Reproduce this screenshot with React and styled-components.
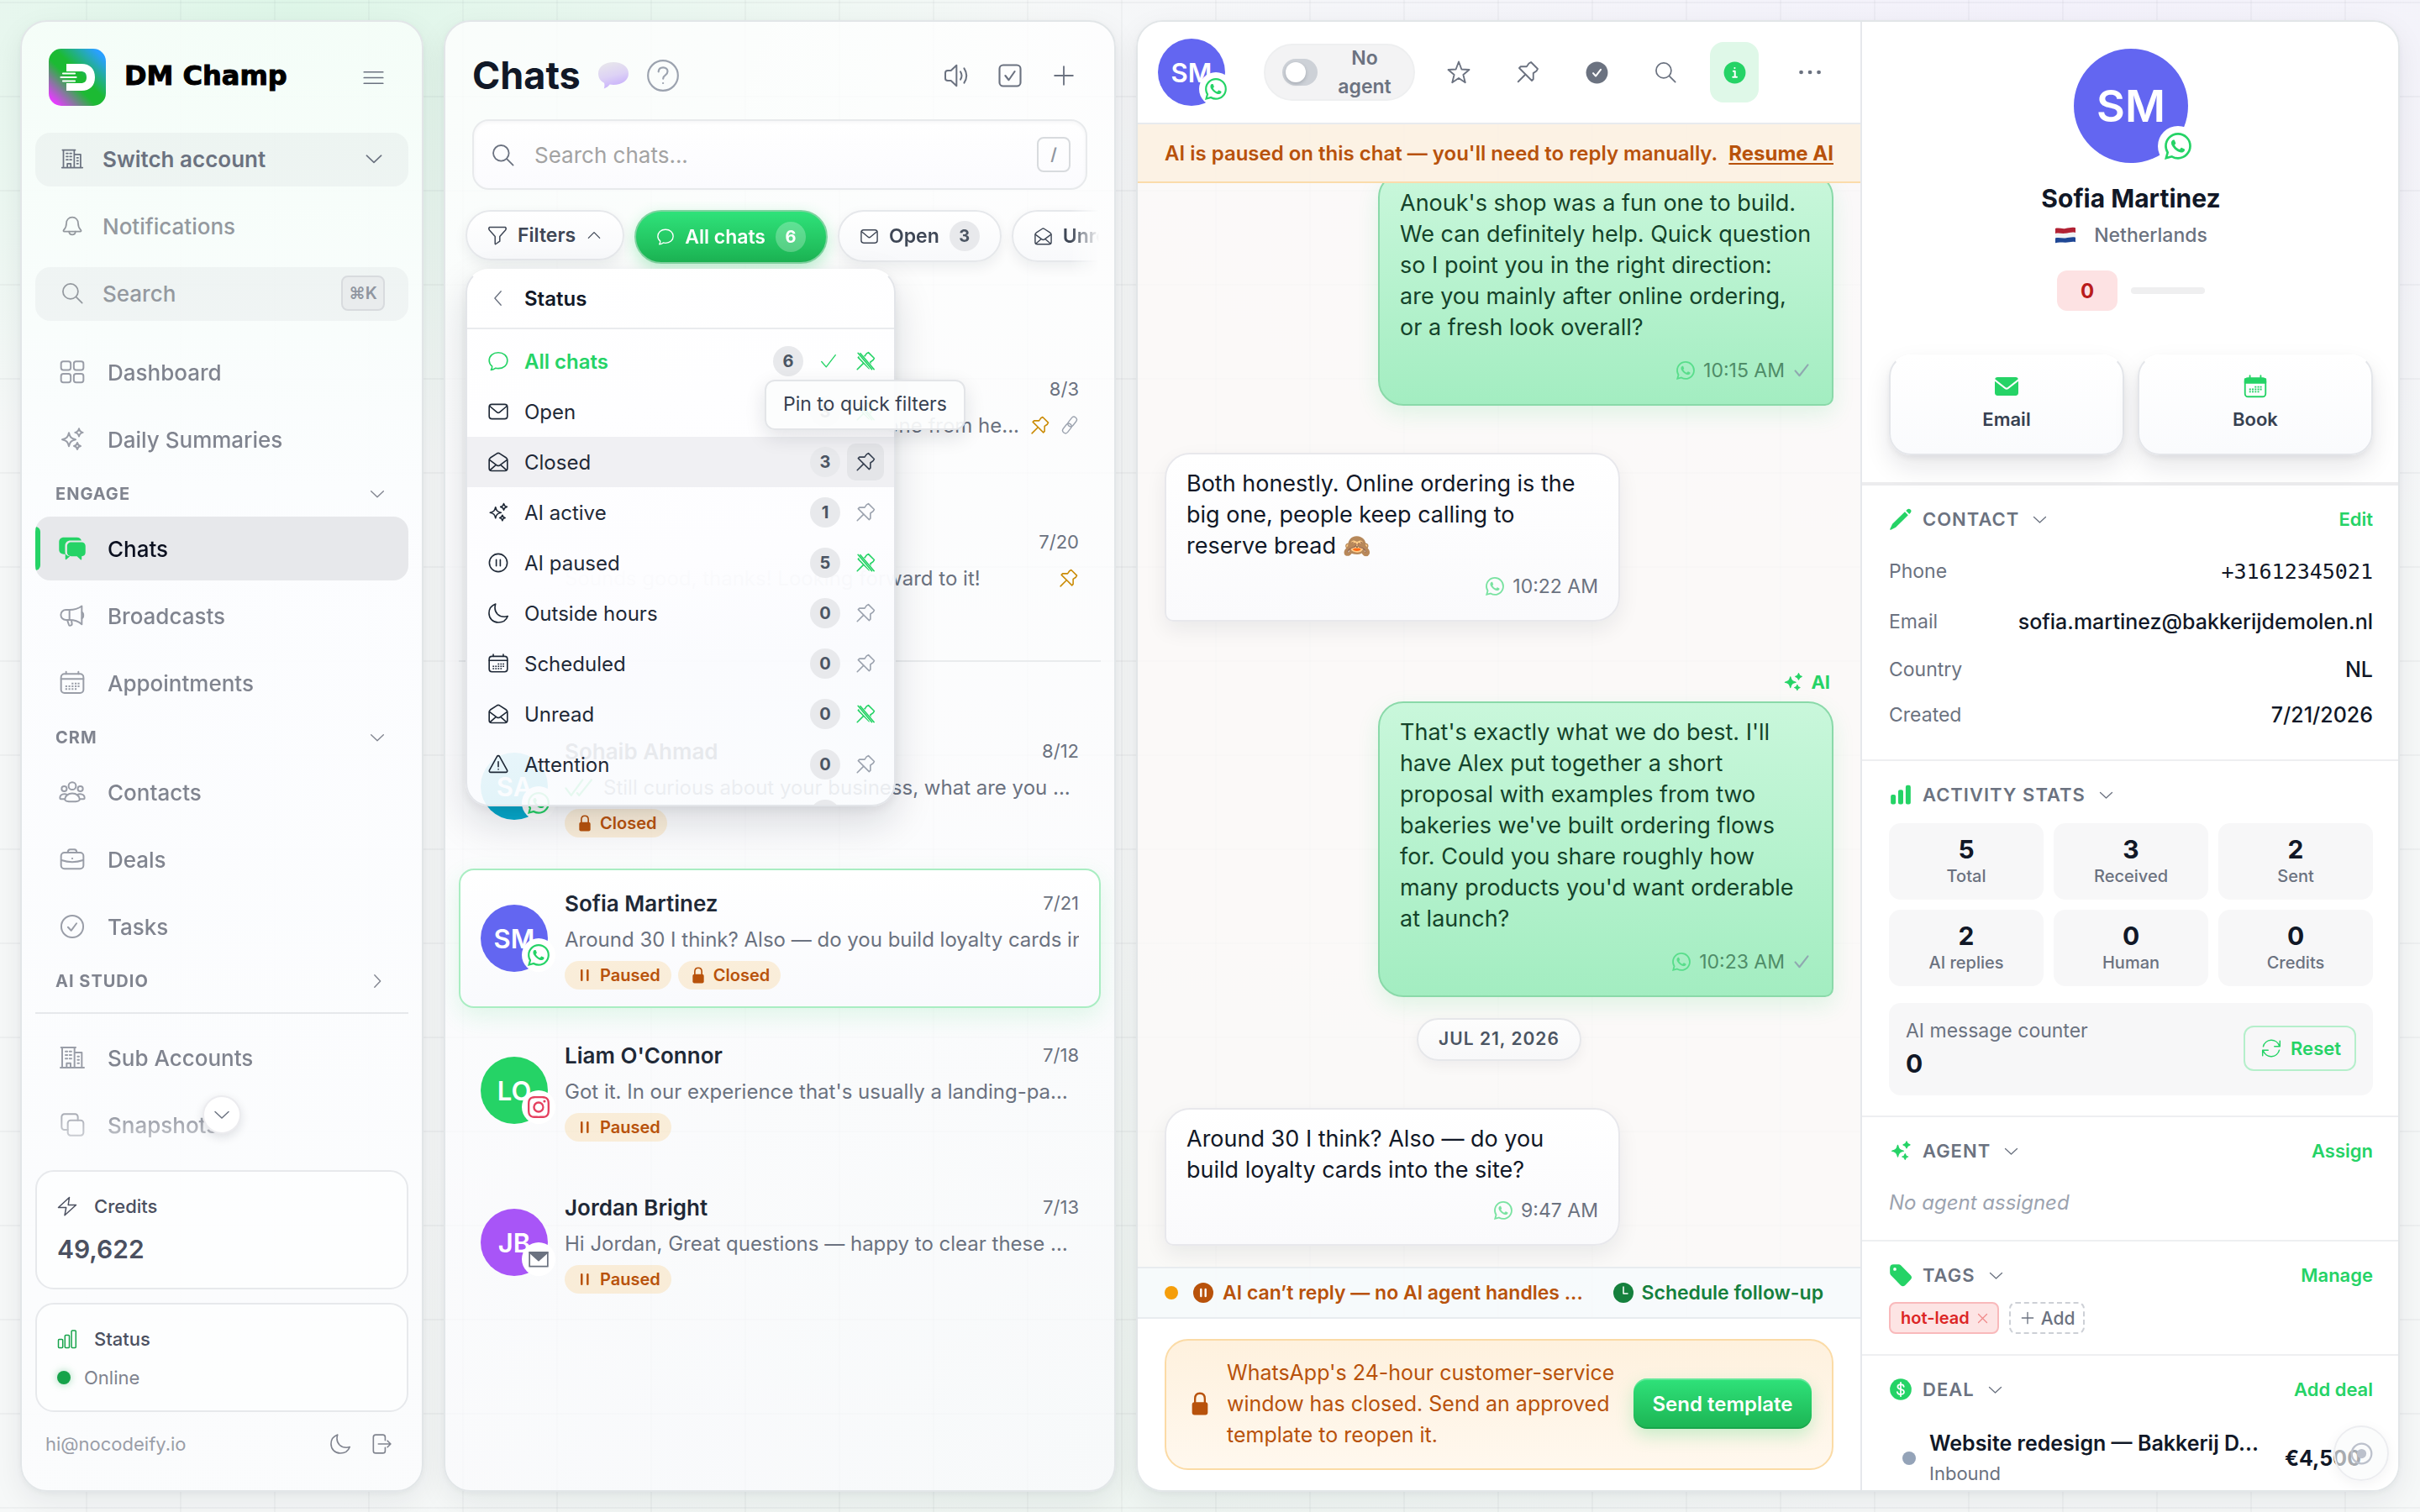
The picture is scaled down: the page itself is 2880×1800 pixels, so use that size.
import React from "react";
import styled, { createGlobalStyle, css } from "styled-components";
import { BsWhatsapp, BsInstagram } from "react-icons/bs";

const GlobalStyle = createGlobalStyle`
  * {
    box-sizing: border-box;
  }
  body {
    margin: 0;
    font-family: Inter, "Noto Sans", sans-serif;
    font-size: 24px;
    color: #111827;
    -webkit-font-smoothing: antialiased;
  }
  button, input {
    font: inherit;
    color: inherit;
  }
  button {
    border: 0;
    background: none;
    padding: 0;
    cursor: pointer;
  }
  p, h1, h2, h3, ul, dl, dd {
    margin: 0;
    padding: 0;
  }
  ul {
    list-style: none;
  }
  a {
    color: inherit;
    text-decoration: none;
  }
`;

/* ---------- icons ---------- */

const sparkle = (
  <>
    <path d="M9 6.2c.9 4 2 5.1 6 6-4 .9-5.1 2-6 6-.9-4-2-5.1-6-6 4-.9 5.1-2 6-6z" />
    <path d="M18 2.4c.5 2.3 1.2 3 3.5 3.5-2.3.5-3 1.2-3.5 3.5-.5-2.3-1.2-3-3.5-3.5 2.3-.5 3-1.2 3.5-3.5z" />
    <path d="M16.5 15c.4 2 1 2.6 3 3-2 .4-2.6 1-3 3-.4-2-1-2.6-3-3 2-.4 2.6-1 3-3z" />
  </>
);
const pin = (
  <>
    <path d="M15.2 2.4 21.6 8.8 20.4 10.8 17.4 12.9 17.4 18.6 16 20 4 8 5.4 6.6 11.1 6.6 13.2 3.6z" />
    <path d="M9.8 14.2 3 21" />
  </>
);
const building = (
  <>
    <path d="M3 21V3h11v18M14 7.5h6.5V21M1.5 21h21M2 3h13M7 21v-4h3.5v4" />
    <path d="M6 6.5h1.6M9.6 6.5h1.6M6 9.7h1.6M9.6 9.7h1.6M6 13h1.6M9.6 13h1.6M16.8 11h1.2M16.8 14h1.2M16.8 17h1.2" />
  </>
);
const calendarDots = (
  <path
    d="M12.2 12.5h.1M15 12.5h.1M17.6 12.5h.1M6.6 15h.1M9.4 15h.1M12.2 15h.1M15 15h.1M17.6 15h.1M6.6 17.5h.1M9.4 17.5h.1M12.2 17.5h.1M15 17.5h.1"
    strokeLinecap="square"
  />
);

const glyphs = {
  menu: <path d="M2 6h20M2 12h20M2 18h20" />,
  building,
  bell: (
    <>
      <path d="M12 3.2c-3.6 0-6 2.6-6 6 0 4.4-1.4 5.4-2.8 7-.5.7-.2 1.4.7 1.4h16.2c.9 0 1.2-.7.7-1.4-1.4-1.6-2.8-2.6-2.8-7 0-3.4-2.4-6-6-6z" />
      <path d="M8.7 17.7c.2 2 1.5 3.2 3.3 3.2s3.1-1.2 3.3-3.2" />
    </>
  ),
  search: (
    <>
      <circle cx="10.2" cy="10.2" r="7.7" />
      <path d="m16 16 6 6" />
    </>
  ),
  down: <path d="m4 8.5 8 7.5 8-7.5" />,
  up: <path d="m4 16 8-8 8 8" />,
  right: <path d="m8.5 4 7.5 8-7.5 8" />,
  left: <path d="m15.5 3-8 9 8 9" />,
  grid: (
    <>
      <rect x="2" y="2.5" width="8.6" height="7.6" rx="2" />
      <rect x="13.4" y="2.5" width="8.6" height="7.6" rx="2" />
      <rect x="2" y="13.5" width="8.6" height="7.6" rx="2" />
      <rect x="13.4" y="13.5" width="8.6" height="7.6" rx="2" />
    </>
  ),
  sparkle,
  chats: (
    <g fill="currentColor" stroke="none">
      <path d="M4.500 2h11.500c2.300 0 3.700 1 4.200 2.900H10.600c-3.200 0-5 1.800-5 4.900v5c0 .9.1 1.600.4 2.200H4.500C2 17 .2 15.400.2 12.900V6.200C.2 3.600 2 2 4.500 2z" />
      <path d="M11.200 6.300h9c2.200 0 3.600 1.400 3.600 3.500v5.600c0 2.100-1.300 3.500-3.400 3.500v2.600c0 .6-.6.8-1 .4l-3.200-3h-5c-2.200 0-3.800-1.400-3.800-3.500V9.800c0-2.100 1.600-3.500 3.800-3.500z" />
      <path d="M5.800 17v4.300c0 .5.500.8.9.4l3.300-2.700c-1.700-.2-3.100-.8-3.700-2z" />
    </g>
  ),
  horn: (
    <>
      <path d="M9.5 6.8c4 0 8-1.2 11-3.4v16.2c-3-2.6-7-3.8-11-3.8H6.3a4.5 4.5 0 0 1 0-9z" />
      <path d="M9.5 7v8.7M20.6 9c1.7.4 1.7 4.8 0 5.2M7.6 16l1.3 3.9c.6 1.5 3 1 2.8-.8l-.4-2.800" />
    </>
  ),
  calendar: (
    <>
      <rect x="2" y="4" width="20" height="17" rx="3" />
      <path d="M2 8.5h20M6.5 2v2M17.5 2v2" />
      {calendarDots}
    </>
  ),
  people: (
    <>
      <circle cx="12" cy="6.5" r="3.3" />
      <circle cx="4.8" cy="9" r="2.3" />
      <circle cx="19.2" cy="9" r="2.3" />
      <path d="M5.4 18.5c0-3 2.9-5.3 6.6-5.3s6.6 2.3 6.6 5.3c0 1.2-2.8 2-6.6 2s-6.6-.8-6.6-2z" />
      <path d="M5.3 18.2H2c-.7 0-1-.4-1-1 0-2 1.600-3.500 4-3.500.9 0 1.700.2 2.300.6M18.700 18.200H22c.7 0 1-.4 1-1 0-2-1.600-3.500-4-3.500-.9 0-1.700.2-2.300.6" />
    </>
  ),
  bag: (
    <>
      <rect x="2" y="6" width="20" height="14.5" rx="3" />
      <path d="M8 6c0-2 .8-2.8 2.2-2.8h3.6C15.2 3.2 16 4 16 6M2.3 12.8c6 2 13.4 2 19.4 0M11.9 11.2h.2" />
    </>
  ),
  checkCircle: (
    <>
      <circle cx="12" cy="12" r="9.8" />
      <path d="m8.2 12.6 2.8 3 4.8-6.4" />
    </>
  ),
  stack: (
    <>
      <rect x="8" y="8" width="14" height="13.5" rx="2.5" />
      <path d="M8 16.5H5A2.5 2.5 0 0 1 2.5 14V5A2.5 2.5 0 0 1 5 2.5h9.5A2.5 2.5 0 0 1 17 5v3" />
    </>
  ),
  bolt: <path d="M14.5 1.5 1.5 13.5h9.200L9 22.800 22.500 10.500h-9.300z" />,
  bars: (
    <>
      <rect x="1.5" y="12.5" width="5.2" height="10" rx="1" />
      <rect x="9.3" y="7.5" width="5.2" height="15" rx="1" />
      <rect x="17.1" y="2" width="5.2" height="20.5" rx="1" />
    </>
  ),
  barsFill: (
    <g fill="currentColor">
      <rect x="2.6" y="12.8" width="3.6" height="8.4" rx="1" />
      <rect x="10.2" y="7.8" width="3.6" height="13.4" rx="1" />
      <rect x="17.8" y="3.2" width="3.6" height="18" rx="1" />
    </g>
  ),
  moon: <path d="M9 1.800C4.600 3.400 1.800 7.200 1.800 12c0 5.800 4.400 10.200 10.200 10.200 4.900 0 8.700-2.500 10.400-7-1.400.5-2.400.7-3.800.7-6 0-10.300-4-10.300-9.800 0-1.600.2-2.800.7-4.300z" />,
  logout: (
    <>
      <path d="M17 8V4.5A2.5 2.5 0 0 0 14.5 2h-8A2.5 2.5 0 0 0 4 4.5v15A2.5 2.5 0 0 0 6.5 22h8a2.5 2.5 0 0 0 2.5-2.5V16" />
      <path d="M9.5 12H23M19.5 8.5 23 12l-3.5 3.5" />
    </>
  ),
  help: (
    <>
      <circle cx="12" cy="12" r="10.7" />
      <path d="M8.8 9.200c.1-1.900 1.400-3 3.300-3 1.800 0 3.200 1.100 3.200 2.800 0 1.300-.6 2-1.700 2.800-1.100.7-1.500 1.200-1.500 2.400M12 17.400h.1" />
    </>
  ),
  speaker: (
    <>
      <path d="M11.5 2.8v18.4l-5-4.7H3.7c-1.3 0-2.2-.8-2.2-2.1V9.6c0-1.3.9-2.1 2.2-2.1h2.8z" />
      <path d="M15 8.5c1.3 2 1.3 5 0 7M18.3 5.5c2.6 4 2.6 9 0 13" />
    </>
  ),
  tickBox: (
    <>
      <rect x="2" y="2" width="20" height="20" rx="3.5" />
      <path d="m7.5 12 3.3 4.2L16.5 8" />
    </>
  ),
  plus: <path d="M12 2v20M2 12h20" />,
  cross: <path d="m4 4 16 16M20 4 4 20" />,
  funnel: <path d="M2.5 2.5h19c1 1 .8 2.4 0 3.5l-6.700 7.600v5.600L10 22.500c-.4.3-.8 0-.8-.5v-8.400L2.5 6c-.8-1.100-1-2.500 0-3.500z" />,
  bubble: <path d="M12 2.5c5.7 0 10 3.700 10 8.800S17.700 20 12 20c-1 0-2-.1-2.900-.4-1.600 1.300-3.300 2-5.100 2 .9-1.100 1.300-2.400 1.200-4C3.200 16 2 13.800 2 11.300c0-5.100 4.300-8.800 10-8.800z" />,
  mail: (
    <>
      <rect x="2" y="4" width="20" height="16" rx="3" />
      <path d="m2.6 6 7.8 6.5c1 .9 2.2.9 3.2 0L21.4 6" />
    </>
  ),
  mailFill: (
    <g fill="currentColor" stroke="none">
      <path d="M2.8 2.5h18.4c1.4 0 2.3.7 2.6 2L12.9 13c-.6.5-1.2.5-1.8 0L.2 4.5c.3-1.3 1.2-2 2.6-2z" />
      <path d="M0 6.6 9.9 14.4c1.4 1 2.8 1 4.2 0L24 6.6v11.9c0 1.9-1 3-2.9 3H2.9c-1.9 0-2.9-1.1-2.9-3z" />
    </g>
  ),
  mailOpen: (
    <>
      <path d="M2 10c0-1.4.5-2.2 1.6-2.9l7-4.5c1-.6 1.8-.6 2.8 0l7 4.5C21.5 7.8 22 8.6 22 10v9c0 1.7-1 2.7-2.7 2.7H4.7C3 21.7 2 20.7 2 19z" />
      <path d="m2.3 9.5 8 6c1.1.8 2.3.8 3.4 0l8-6M3 20.8l6.5-5.6M21 20.8l-6.5-5.6" />
    </>
  ),
  pause: (
    <>
      <circle cx="12" cy="12" r="9.8" />
      <path d="M9.8 8.5v7M14.2 8.5v7" />
    </>
  ),
  pauseFill: (
    <>
      <circle cx="12" cy="12" r="12" fill="currentColor" stroke="none" />
      <path d="M9.3 8v8M14.7 8v8" stroke="#fff" strokeWidth="2.4" />
    </>
  ),
  pauseBars: <path d="M7.5 5v14M16 5v14" strokeWidth="3" />,
  warn: (
    <>
      <path d="M10.6 3.3c.6-1.1 2.2-1.1 2.8 0l8.3 15c.6 1.2-.1 2.4-1.4 2.4H3.7c-1.3 0-2-1.2-1.4-2.4z" />
      <path d="M12 9v5.5M12 17.4h.1" />
    </>
  ),
  check: <path d="m3 12.5 6 7L21 4" />,
  doubleCheck: <path d="m1 13 4.5 6L15 6M10.5 17l1.7 2L22.5 6" />,
  pin,
  pinOff: (
    <>
      {pin}
      <path d="M5 3.5 21 22" stroke="#fff" strokeWidth="4.5" />
      <path d="M3.8 3 19 21M6.4 3.4 21.4 21" />
    </>
  ),
  link: (
    <g transform="rotate(-52 12 12)">
      <rect x="-.5" y="8.3" width="14" height="7.4" rx="3.7" />
      <rect x="10.5" y="8.3" width="14" height="7.4" rx="3.7" />
    </g>
  ),
  star: <path d="m12 2 2.7 7.2 7.3.4-5.7 4.8 1.9 7.4-6.2-4.2-6.2 4.2 1.9-7.4L2 9.6l7.3-.4z" />,
  checkFill: (
    <>
      <circle cx="12" cy="12" r="11.5" fill="currentColor" stroke="none" />
      <path d="m8 12.6 2.7 3L16 8.8" stroke="#fff" strokeWidth="1.8" />
    </>
  ),
  infoFill: (
    <>
      <circle cx="12" cy="12" r="11.5" fill="currentColor" stroke="none" />
      <path d="M10.5 10.5h1.7v6M10 16.7h4.2M11.9 7.2h.1" stroke="#fff" strokeWidth="1.8" />
    </>
  ),
  dots: <path d="M3 12h.1M12 12h.1M21 12h.1" strokeWidth="4" />,
  lock: (
    <>
      <rect x="4" y="10.5" width="16" height="13" rx="2.5" fill="currentColor" stroke="none" />
      <path d="M7 11V7c0-3.5 2-5.5 5-5.5s5 2 5 5.5v4" strokeWidth="2" />
    </>
  ),
  clockFill: (
    <>
      <circle cx="12" cy="12" r="12" fill="currentColor" stroke="none" />
      <path d="M12 5v8h5" stroke="#fff" />
    </>
  ),
  pencil: (
    <g fill="currentColor" stroke="none">
      <path d="m16.2 4.6 3.4 3.4L7 20.4l-5 2.5c-.6.3-1.2-.3-.9-.9L3.5 17z" />
      <path d="m17.4 3.4 1.2-1.2c1-1 2.3-1 3.2-.1l.3.3c.9.9.8 2.2-.1 3.2l-1.2 1.2z" />
    </g>
  ),
  tag: (
    <path
      fillRule="evenodd"
      fill="currentColor"
      stroke="none"
      d="M1 4.5C1 2.4 2.4 1 4.5 1h4.8c1.3 0 2.3.4 3.2 1.3l9.7 9.9c1.3 1.3 1.3 3 0 4.3l-5.8 5.9c-1.3 1.3-3 1.3-4.3 0L2.3 12.5C1.4 11.6 1 10.6 1 9.3zM6 4.3a1.6 1.6 0 1 0 0 3.2 1.6 1.6 0 0 0 0-3.2z"
    />
  ),
  calendarFill: (
    <>
      <rect x="1.5" y="3.5" width="21" height="19" rx="3" />
      <path d="M1.5 4.5h21v4h-21zM6.5 1v2M17.5 1v2" fill="currentColor" />
      {calendarDots}
    </>
  ),
  refresh: (
    <path d="M21.5 4v6h-6M2.5 20v-6h6M3.2 10A9.2 9.2 0 0 1 20.8 9.2M20.8 14A9.2 9.2 0 0 1 3.2 14.8" />
  ),
  dollar: (
    <>
      <circle cx="12" cy="12" r="11" fill="currentColor" stroke="none" />
      <path d="M15.2 9.3c-.2-1.5-1.4-2.3-3.2-2.3s-3.1.9-3.1 2.4c0 3.5 6.5 1.6 6.5 5.2 0 1.5-1.4 2.5-3.4 2.5s-3.3-.9-3.5-2.5M12 5v14" stroke="#fff" />
    </>
  ),
  target: (
    <>
      <circle cx="12" cy="12" r="10.5" strokeWidth="2" />
      <circle cx="12" cy="12" r="5" fill="currentColor" stroke="none" />
    </>
  ),
  envelopeBadge: (
    <>
      <rect x="2" y="4.5" width="20" height="15.5" />
      <path d="M2 4.5h20l-10 9z" fill="currentColor" />
    </>
  ),
};

const Svg = styled.svg`
  flex: none;
  display: block;
  width: ${(p) => p.$size}px;
  height: ${(p) => p.$size}px;
  color: ${(p) => p.$color || "currentColor"};
`;

const Icon = ({ name, size = 24, color, weight = 1.5, solid }) => (
  <Svg
    $size={size}
    $color={color}
    viewBox="0 0 24 24"
    fill={solid ? "currentColor" : "none"}
    stroke="currentColor"
    strokeWidth={weight}
    strokeLinecap="round"
    strokeLinejoin="round"
    aria-hidden="true"
  >
    {glyphs[name]}
  </Svg>
);

/* ---------- page ---------- */

const Page = styled.div`
  height: 100vh;
  padding: 24px;
  display: grid;
  grid-template-columns: 480px 800px minmax(0, 1fr);
  gap: 24px;
  background:
    linear-gradient(rgba(17, 24, 39, 0.035) 2px, transparent 2px) 0 2px / 112px 112px,
    linear-gradient(90deg, rgba(17, 24, 39, 0.03) 2px, transparent 2px) 102px 0 / 112px 112px,
    radial-gradient(900px 560px at 12% 0%, #def6e8, transparent),
    radial-gradient(1300px 700px at 85% 0%, #f3f1fb, transparent),
    radial-gradient(900px 700px at 45% 95%, #eef5f1, transparent),
    #f6f8f8;
`;

const Panel = styled.div`
  min-width: 0;
  min-height: 0;
  border: 2px solid #e2e6e8;
  border-radius: 32px;
  box-shadow: 0 12px 36px rgba(17, 24, 39, 0.07), 0 2px 6px rgba(17, 24, 39, 0.04);
  display: flex;
  overflow: hidden;
`;

/* ---------- sidebar ---------- */

const Side = styled(Panel).attrs({ as: "nav" })`
  flex-direction: column;
  padding: 32px 16px 33px;
  background: linear-gradient(rgba(246, 254, 249, 0.92), rgba(252, 253, 255, 0.95) 36%, rgba(251, 252, 253, 0.95));
`;

const Brand = styled.div`
  display: flex;
  align-items: center;
  padding: 0 28px 0 16px;
  height: 68px;
  margin-bottom: 32px;
  color: #6b7280;

  strong {
    flex: 1;
    margin-left: 22px;
    font-family: "DejaVu Sans", sans-serif;
    font-size: 32px;
    line-height: 40px;
    padding-bottom: 4px;
    font-weight: 700;
    color: #000;
    -webkit-text-stroke: 1px #000;
  }
`;

const TopLink = styled.button`
  height: 64px;
  margin-bottom: 16px;
  padding: 0 28px 2px 30px;
  display: flex;
  align-items: center;
  gap: 22px;
  border-radius: 18px;
  text-align: left;
  font-size: 26px;
  font-weight: ${(p) => (p.$strong ? 600 : 500)};
  color: ${(p) => (p.$strong ? "#6b7280" : "#94999f")};
  background: ${(p) => (p.$filled ? "rgba(17, 24, 39, 0.04)" : "transparent")};

  span {
    flex: 1;
  }
`;

const Kbd = styled.kbd`
  min-width: ${(p) => p.$w}px;
  height: 42px;
  display: flex;
  align-items: center;
  justify-content: center;
  border: 2px solid #d8dbde;
  border-radius: 8px;
  font-family: Inter, "DejaVu Sans", sans-serif;
  font-size: 20px;
  font-weight: 600;
  color: #9096a0;
  background: ${(p) => (p.$filled ? "#e9eced" : "transparent")};
`;

const NavScroll = styled.div`
  flex: 1;
  min-height: 0;
  margin-top: 7px;
  display: flex;
  flex-direction: column;
  gap: 4px;
  overflow: hidden;
  mask-image: linear-gradient(#000 calc(100% - 80px), transparent);
`;

const NavWrap = styled.div`
  position: relative;
  flex: 1;
  min-height: 0;
  display: flex;
  flex-direction: column;
`;

const NavLink = styled.a`
  position: relative;
  flex: none;
  height: 76px;
  padding-left: 28px;
  display: flex;
  align-items: center;
  gap: 26px;
  border-radius: 18px;
  font-size: 26px;
  font-weight: 500;
  color: #80848f;
  overflow: hidden;

  svg {
    color: #9a9ea8;
  }

  ${(p) =>
    p.$active &&
    css`
      color: #0b1020;
      background: #e7e8eb;
      svg {
        color: #25d366;
      }
      &::before {
        content: "";
        position: absolute;
        left: 0;
        top: 12px;
        bottom: 12px;
        width: 6px;
        border-radius: 0 6px 6px 0;
        background: #25d366;
      }
    `}
`;

const NavGroup = styled.button`
  flex: none;
  height: 46px;
  padding: 0 26px 0 24px;
  display: flex;
  align-items: center;
  justify-content: space-between;
  font-size: 20px;
  font-weight: 700;
  letter-spacing: 1px;
  color: #80848f;
`;

const Rule = styled.hr`
  flex: none;
  width: 100%;
  height: 2px;
  margin: 10px 0;
  border: 0;
  background: #e6e8eb;
`;

const MoreButton = styled.button`
  position: absolute;
  left: 50%;
  bottom: 43px;
  width: 46px;
  height: 46px;
  margin-left: -23px;
  display: grid;
  place-items: center;
  border-radius: 50%;
  border: 2px solid #ececef;
  background: #fff;
  color: #6b7280;
  box-shadow: 0 4px 12px rgba(17, 24, 39, 0.12);
`;

const SideCard = styled.div`
  height: ${(p) => p.$h}px;
  margin-bottom: 16px;
  padding: 24px;
  border: 2px solid #e7e9ec;
  border-radius: 22px;
  background: rgba(255, 255, 255, 0.5);
  color: #4b5060;
`;

const CardHead = styled.div`
  height: 34px;
  display: flex;
  align-items: center;
  gap: 20px;
  font-size: 22px;
  font-weight: 500;
`;

const Amount = styled.p`
  margin-top: 14px;
  font-size: 30px;
  line-height: 40px;
  font-weight: 600;
`;

const Online = styled.p`
  margin-top: 14px;
  display: flex;
  align-items: center;
  gap: 16px;
  font-size: 22px;
  line-height: 30px;
  color: #80848f;

  &::before {
    content: "";
    width: 16px;
    height: 16px;
    border-radius: 50%;
    background: #16a34a;
    box-shadow: 0 0 10px rgba(22, 163, 74, 0.4);
  }
`;

const SideFoot = styled.div`
  height: 44px;
  padding: 0 20px 0 12px;
  display: flex;
  align-items: center;
  gap: 22px;
  font-size: 22px;
  color: #9a9ea8;

  span {
    flex: 1;
  }
  button {
    color: #80848f;
  }
`;

const Logo = () => (
  <svg width="68" height="68" viewBox="0 0 68 68" aria-hidden="true">
    <defs>
      <linearGradient id="brand" x1="0" y1="1" x2="1" y2="0">
        <stop offset="0.08" stopColor="#e63cff" />
        <stop offset="0.42" stopColor="#1cba33" />
        <stop offset="0.55" stopColor="#1cba33" />
        <stop offset="0.9" stopColor="#2aa0ff" />
      </linearGradient>
    </defs>
    <rect width="68" height="68" rx="15" fill="url(#brand)" />
    <path d="M21 18h18c10 0 16 6 16 16s-6 16-16 16H21v-9h17c5 0 7-2.5 7-7s-2-7-7-7H21z" fill="#fff" />
    <path d="M17 29.5h14M14.5 34h18M17 38.5h14" stroke="#fff" strokeWidth="2.2" strokeLinecap="round" />
  </svg>
);

const Sidebar = () => (
  <Side>
    <Brand>
      <Logo />
      <strong>DM Champ</strong>
      <button aria-label="Toggle menu">
        <Icon name="menu" size={27} />
      </button>
    </Brand>
    <TopLink $filled $strong>
      <Icon name="building" size={28} />
      <span>Switch account</span>
      <Icon name="down" size={26} />
    </TopLink>
    <TopLink>
      <Icon name="bell" size={28} />
      <span>Notifications</span>
    </TopLink>
    <TopLink $filled>
      <Icon name="search" size={28} />
      <span>Search</span>
      <Kbd $w={52} $filled>⌘K</Kbd>
    </TopLink>
    <NavWrap>
      <NavScroll>
        <NavLink href="#dashboard"><Icon name="grid" size={32} />Dashboard</NavLink>
        <NavLink href="#summaries"><Icon name="sparkle" size={32} />Daily Summaries</NavLink>
        <NavGroup>ENGAGE<Icon name="down" size={22} /></NavGroup>
        <NavLink href="#chats" $active><Icon name="chats" size={32} />Chats</NavLink>
        <NavLink href="#broadcasts"><Icon name="horn" size={32} />Broadcasts</NavLink>
        <NavLink href="#appointments"><Icon name="calendar" size={32} />Appointments</NavLink>
        <NavGroup>CRM<Icon name="down" size={22} /></NavGroup>
        <NavLink href="#contacts"><Icon name="people" size={32} />Contacts</NavLink>
        <NavLink href="#deals"><Icon name="bag" size={32} />Deals</NavLink>
        <NavLink href="#tasks"><Icon name="checkCircle" size={32} />Tasks</NavLink>
        <NavGroup>AI STUDIO<Icon name="right" size={22} /></NavGroup>
        <Rule />
        <NavLink href="#sub-accounts"><Icon name="building" size={32} />Sub Accounts</NavLink>
        <NavLink href="#snapshots"><Icon name="stack" size={32} />Snapshots</NavLink>
      </NavScroll>
      <MoreButton aria-label="Scroll down"><Icon name="down" size={24} /></MoreButton>
    </NavWrap>
    <SideCard $h={142}>
      <CardHead><Icon name="bolt" size={24} />Credits</CardHead>
      <Amount>49,622</Amount>
    </SideCard>
    <SideCard $h={130}>
      <CardHead><Icon name="bars" size={24} color="#16a34a" />Status</CardHead>
      <Online>Online</Online>
    </SideCard>
    <SideFoot>
      <span>hi@nocodeify.io</span>
      <button aria-label="Dark mode"><Icon name="moon" size={26} /></button>
      <button aria-label="Log out"><Icon name="logout" size={26} /></button>
    </SideFoot>
  </Side>
);

/* ---------- chat list ---------- */

const ListPanel = styled(Panel)`
  position: relative;
  flex-direction: column;
  background: linear-gradient(rgba(255, 255, 255, 0.8), rgba(251, 251, 254, 0.7));
`;

const ListHead = styled.header`
  height: 48px;
  margin: 40px 45px 28px 32px;
  display: flex;
  align-items: center;
  gap: 34px;
  color: #6b7280;

  h1 {
    font-size: 45px;
    line-height: 48px;
    font-weight: 700;
    color: #111827;
  }
  > button {
    width: 30px;
    display: grid;
    place-items: center;
  }
`;

const TitleGroup = styled.div`
  flex: 1;
  display: flex;
  align-items: center;
  gap: 20px;
`;

const SearchBox = styled.label`
  height: 84px;
  margin: 0 32px;
  padding: 0 18px 0 20px;
  display: flex;
  align-items: center;
  gap: 23px;
  border: 2px solid #e8eaec;
  border-radius: 20px;
  background: linear-gradient(#fff, #fbfbfe);
  box-shadow: inset 0 2px 4px rgba(17, 24, 39, 0.04);
  color: #6b7280;

  input {
    flex: 1;
    min-width: 0;
    border: 0;
    outline: 0;
    padding: 0;
    background: none;
    font-size: 26px;
  }
  input::placeholder {
    color: #a3a3a3;
    opacity: 1;
  }
`;

const FilterBar = styled.div`
  position: relative;
  z-index: 2;
  height: 64px;
  margin: 24px 16px 0 24px;
  display: flex;
  align-items: flex-start;
`;

const Strip = styled.div`
  flex: 1;
  min-width: 0;
  height: 100px;
  margin-top: -10px;
  padding: 10px 0 0 12px;
  display: flex;
  align-items: flex-start;
  gap: 12px;
  overflow: hidden;
  mask-image: linear-gradient(90deg, #000 calc(100% - 36px), transparent calc(100% - 2px));
`;

const Pill = styled.button`
  flex: none;
  height: ${(p) => p.$h || 62}px;
  padding: 0 24px;
  display: flex;
  align-items: center;
  gap: 12px;
  border: 2px solid #e6e8eb;
  border-radius: 32px;
  background: linear-gradient(#fff, #f8f9fb);
  box-shadow: 0 6px 16px rgba(17, 24, 39, 0.07);
  font-size: 23px;
  font-weight: 600;
  color: #3f4756;

  ${(p) =>
    p.$on &&
    css`
      border-color: #7fd3a0;
      background: linear-gradient(#2fe27a, #1cb453);
      box-shadow: 0 6px 18px rgba(37, 211, 102, 0.3);
      color: #fff;
    `}
`;

const Count = styled.span`
  width: 36px;
  height: 36px;
  display: grid;
  place-items: center;
  border-radius: 50%;
  font-size: 20px;
  font-weight: 700;
  color: ${(p) => (p.$light ? "#fff" : "#4b5563")};
  background: ${(p) => (p.$light ? "rgba(255, 255, 255, 0.25)" : "#e8e9ec")};
`;

const MenuWrap = styled.div`
  position: absolute;
  top: 70px;
  left: 0;
  width: 512px;
`;

const Menu = styled.div`
  height: 640px;
  border: 2px solid #e3e5e9;
  border-top-color: #fff;
  border-radius: 28px;
  overflow: hidden;
  background: linear-gradient(
    172deg,
    rgba(255, 255, 255, 0.99),
    rgba(253, 253, 255, 0.985) 55%,
    rgba(250, 251, 254, 0.95) 72%,
    rgba(250, 252, 254, 0.88)
  );
  box-shadow: 0 20px 48px rgba(17, 24, 39, 0.14), 0 4px 12px rgba(17, 24, 39, 0.06);
`;

const MenuHead = styled.button`
  width: 100%;
  height: 70px;
  padding: 0 26px 2px;
  display: flex;
  align-items: center;
  gap: 20px;
  border-bottom: 2px solid #e9ebee;
  font-weight: 600;
  color: #111827;

  svg {
    color: #6b7280;
  }
`;

const MenuList = styled.ul`
  margin-top: 8px;
`;

const MenuRow = styled.li`
  height: 60px;
  padding: 0 12px 0 24px;
  display: flex;
  align-items: center;
  gap: 8px;
  font-weight: ${(p) => (p.$on ? 600 : 400)};
  color: ${(p) => (p.$on ? "#25d366" : "#1f2937")};
  background: ${(p) => (p.$hover ? "#f0f0f3" : "transparent")};
`;

const MenuLabel = styled.button`
  flex: 1;
  display: flex;
  align-items: center;
  gap: 18px;
  font-weight: inherit;
  text-align: left;
`;

const Tick = styled.span`
  width: 36px;
  padding-left: 8px;
  display: grid;
  place-items: center;
`;

const PinButton = styled.button`
  width: 44px;
  height: 44px;
  display: grid;
  place-items: center;
  border-radius: 10px;
  color: ${(p) => (p.$pinned ? "#25d366" : p.$hover ? "#374151" : "#9ca3af")};
  background: ${(p) => (p.$hover ? "#e4e5e8" : "transparent")};
`;

const Tooltip = styled.div`
  position: absolute;
  top: 132px;
  left: 356px;
  height: 60px;
  padding: 0 20px 2px;
  display: flex;
  align-items: center;
  border: 2px solid #e3e5e8;
  border-radius: 12px;
  background: rgba(252, 253, 253, 0.92);
  box-shadow: 0 8px 24px rgba(17, 24, 39, 0.12);
  font-size: 23px;
  color: #374151;
  white-space: nowrap;
`;

const Rows = styled.div`
  padding: 108px 16px 0;
  display: flex;
  flex-direction: column;
  gap: 15px;
`;

const PinnedRows = styled.div`
  display: flex;
  flex-direction: column;
  gap: 16px;
  padding-bottom: 16px;
  margin-bottom: 50px;
  border-bottom: 2px solid #e9ebed;
`;

const Row = styled.article`
  height: 166px;
  padding: 20px 24px;
  display: flex;
  align-items: center;
  gap: 20px;
  border: 2px solid transparent;
  border-radius: 18px;

  ${(p) =>
    p.$active &&
    css`
      border-color: #a9edc2;
      background: linear-gradient(#fff, #f9fafd);
      box-shadow: 0 10px 28px rgba(37, 211, 102, 0.13);
    `}
`;

const RowBody = styled.div`
  flex: 1;
  min-width: 0;
  height: 122px;
`;

const RowTop = styled.div`
  height: 38px;
  display: flex;
  align-items: center;
  justify-content: space-between;

  h3 {
    font-size: 26px;
    font-weight: 600;
    color: #1f2937;
  }
  time {
    font-size: 22px;
    color: #6b7280;
  }
`;

const RowText = styled.div`
  height: 48px;
  margin-bottom: 2px;
  display: flex;
  align-items: center;
  gap: 12px;
  color: #6b7280;

  p {
    flex: 1;
    min-width: 0;
    overflow: hidden;
    white-space: nowrap;
    text-overflow: ${(p) => (p.$cut ? "clip" : "ellipsis")};
    text-align: ${(p) => (p.$end ? "right" : "left")};
  }
`;

const Tags = styled.div`
  display: flex;
  gap: 8px;
`;

const Tag = styled.span`
  height: 34px;
  padding: 0 13px 0 14px;
  display: flex;
  align-items: center;
  gap: 8px;
  border-radius: 17px;
  background: rgba(245, 158, 11, 0.15);
  font-size: 20px;
  font-weight: 600;
  color: #b8520b;
`;

const Face = styled.div`
  position: relative;
  flex: none;
  width: ${(p) => p.$size}px;
  height: ${(p) => p.$size}px;
  display: grid;
  place-items: center;
  border-radius: 50%;
  background: ${(p) => p.$color};
  font-size: ${(p) => (p.$size > 100 ? 52 : 31)}px;
  font-weight: 600;
  color: #fff;
`;

const Channel = styled.span`
  position: absolute;
  right: ${(p) => (p.$big ? -12 : -9)}px;
  bottom: ${(p) => (p.$big ? -4 : 0)}px;
  width: ${(p) => (p.$big ? 48 : 40)}px;
  height: ${(p) => (p.$big ? 48 : 40)}px;
  display: grid;
  place-items: center;
  border-radius: 50%;
  background: #fff;
`;

const Avatar = ({ initials, color, channel, size = 80 }) => {
  const big = size > 100;
  const icon = big ? 32 : 26;
  return (
    <Face $size={size} $color={color}>
      {initials}
      {channel && (
        <Channel $big={big}>
          {channel === "whatsapp" && <BsWhatsapp size={icon} color="#25d366" />}
          {channel === "instagram" && <BsInstagram size={icon} color="#e4405f" />}
          {channel === "email" && <Icon name="envelopeBadge" size={26} color="#6b7280" weight={1.6} />}
        </Channel>
      )}
    </Face>
  );
};

const filters = [
  { icon: "bubble", label: "All chats", count: 6, on: true, pinned: true },
  { icon: "mail", label: "Open", count: 3, pinned: true },
  { icon: "mailOpen", label: "Closed", count: 3, hover: true },
  { icon: "sparkle", label: "AI active", count: 1 },
  { icon: "pause", label: "AI paused", count: 5, pinned: true },
  { icon: "moon", label: "Outside hours", count: 0 },
  { icon: "calendar", label: "Scheduled", count: 0 },
  { icon: "mailOpen", label: "Unread", count: 0, pinned: true },
  { icon: "warn", label: "Attention", count: 0 },
  { icon: "star", label: "Starred", count: 0 },
];

const StatusMenu = () => (
  <MenuWrap>
    <Menu>
      <MenuHead>
        <Icon name="left" size={22} />
        Status
      </MenuHead>
      <MenuList>
        {filters.map((f) => (
          <MenuRow key={f.label} $on={f.on} $hover={f.hover}>
            <MenuLabel>
              <Icon name={f.icon} size={26} />
              {f.label}
            </MenuLabel>
            <Count>{f.count}</Count>
            {f.on && (
              <Tick>
                <Icon name="check" size={22} />
              </Tick>
            )}
            <PinButton $pinned={f.pinned} $hover={f.hover} aria-label={`Pin ${f.label}`}>
              <Icon name={f.pinned ? "pinOff" : "pin"} size={26} />
            </PinButton>
          </MenuRow>
        ))}
      </MenuList>
    </Menu>
    <Tooltip role="tooltip">Pin to quick filters</Tooltip>
  </MenuWrap>
);

const tagIcon = { Paused: "pauseBars", Closed: "lock" };

const ChatRow = ({ chat }) => (
  <Row $active={chat.active}>
    <Avatar initials={chat.initials} color={chat.color} channel={chat.channel} />
    <RowBody>
      <RowTop>
        <h3>{chat.name}</h3>
        <time>{chat.date}</time>
      </RowTop>
      <RowText $cut={chat.active} $end={chat.end}>
        {chat.read && <Icon name="doubleCheck" size={34} color="#25d366" weight={1.6} />}
        <p>{chat.text}</p>
        {chat.pinned && <Icon name="pin" size={25} color="#ca8a04" />}
        {chat.linked && <Icon name="link" size={22} color="#9ca3af" />}
      </RowText>
      <Tags>
        {chat.tags.map((t) => (
          <Tag key={t}>
            <Icon name={tagIcon[t]} size={20} weight={2.5} />
            {t}
          </Tag>
        ))}
      </Tags>
    </RowBody>
  </Row>
);

const pinnedChats = [
  { color: "transparent", date: "8/3", text: "one from he...", end: true, pinned: true, linked: true, tags: [] },
  { color: "transparent", date: "7/20", text: "Sounds good, thanks! Looking forward to it!", pinned: true, tags: [] },
];

const chats = [
  { initials: "SA", color: "#06a9cb", channel: "whatsapp", name: "Sohaib Ahmad", date: "8/12", read: true, text: "Still curious about your business, what are you ...", tags: ["Closed"] },
  { initials: "SM", color: "#6366f1", channel: "whatsapp", name: "Sofia Martinez", date: "7/21", active: true, text: "Around 30 I think? Also — do you build loyalty cards into the site?", tags: ["Paused", "Closed"] },
  { initials: "LO", color: "#25d366", channel: "instagram", name: "Liam O'Connor", date: "7/18", text: "Got it. In our experience that's usually a landing-page problem", tags: ["Paused"] },
  { initials: "JB", color: "#a855f7", channel: "email", name: "Jordan Bright", date: "7/13", text: "Hi Jordan, Great questions — happy to clear these up for you", tags: ["Paused"] },
];

const Balloon = () => (
  <svg width="38" height="34" viewBox="0 0 38 34" aria-hidden="true">
    <defs>
      <linearGradient id="balloon" x1="0" y1="0" x2="0.3" y2="1">
        <stop offset="0" stopColor="#e9e9ea" />
        <stop offset="0.6" stopColor="#ddd2f5" />
        <stop offset="1" stopColor="#c9b2fb" />
      </linearGradient>
    </defs>
    <path d="M19 1c10.5 0 18 5.5 18 13.5S29.5 28 19 28c-1.5 0-3-.2-4.3-.4-1.5 2-4 4-7 5 .8-2 1-4.5.3-6.8C3.5 23.5 1 19.5 1 14.5 1 6.5 8.5 1 19 1z" fill="url(#balloon)" />
  </svg>
);

const ChatList = () => (
  <ListPanel as="section">
    <ListHead>
      <TitleGroup>
        <h1>Chats</h1>
        <Balloon />
        <button aria-label="Help"><Icon name="help" size={40} color="#9ca3af" weight={1.3} /></button>
      </TitleGroup>
      <button aria-label="Sound"><Icon name="speaker" size={32} /></button>
      <button aria-label="Select chats"><Icon name="tickBox" size={30} weight={1.7} /></button>
      <button aria-label="New chat"><Icon name="plus" size={26} weight={1.7} /></button>
    </ListHead>
    <SearchBox>
      <Icon name="search" size={29} />
      <input type="text" placeholder="Search chats..." aria-label="Search chats" />
      <Kbd $w={40}>/</Kbd>
    </SearchBox>
    <FilterBar>
      <Pill $h={60}>
        <Icon name="funnel" size={24} />
        Filters
        <Icon name="up" size={20} />
      </Pill>
      <Strip>
        <Pill $on $h={64}>
          <Icon name="bubble" size={22} />
          All chats
          <Count $light>6</Count>
        </Pill>
        <Pill>
          <Icon name="mail" size={23} />
          Open
          <Count>3</Count>
        </Pill>
        <Pill>
          <Icon name="mailOpen" size={23} />
          Unread
          <Count>0</Count>
        </Pill>
      </Strip>
      <StatusMenu />
    </FilterBar>
    <Rows>
      <PinnedRows>
        {pinnedChats.map((c) => (
          <ChatRow key={c.date} chat={c} />
        ))}
      </PinnedRows>
      {chats.map((c) => (
        <ChatRow key={c.name} chat={c} />
      ))}
    </Rows>
  </ListPanel>
);

/* ---------- conversation ---------- */

const MainPanel = styled(Panel)`
  display: grid;
  grid-template-columns: minmax(0, 1fr) 640px;
`;

const Thread = styled.section`
  min-height: 0;
  display: flex;
  flex-direction: column;
`;

const ThreadHead = styled.header`
  height: 122px;
  padding: 0 31px 0 24px;
  display: flex;
  align-items: center;
  border-bottom: 2px solid #e8ebee;
  background: #fff;
`;

const AgentToggle = styled.label`
  width: 180px;
  height: 68px;
  margin: 0 auto 0 46px;
  padding: 0 22px 0 20px;
  display: flex;
  align-items: center;
  gap: 20px;
  border: 2px solid #eeeff0;
  border-radius: 34px;
  background: #f3f3f4;
  font-size: 23px;
  line-height: 34px;
  font-weight: 600;
  text-align: center;
  color: #6b7280;

  input {
    appearance: none;
    flex: none;
    width: 42px;
    height: 32px;
    margin: 0;
    padding: 4px;
    border-radius: 16px;
    background: #cdd1d7;
  }
  input::before {
    content: "";
    display: block;
    width: 24px;
    height: 24px;
    border-radius: 50%;
    background: #fff;
    box-shadow: 0 2px 4px rgba(17, 24, 39, 0.2);
  }
  span {
    flex: 1;
  }
`;

const Tools = styled.div`
  display: flex;
  gap: 24px;
`;

const Tool = styled.button`
  width: 58px;
  height: 72px;
  display: grid;
  place-items: center;
  border-radius: 16px;
  color: ${(p) => (p.$on ? "#25d366" : "#6b7280")};
  background: ${(p) => (p.$on ? "#dff8e8" : "transparent")};

  &:last-child {
    margin-left: 8px;
  }
`;

const Banner = styled.div`
  height: 70px;
  padding: 0 32px;
  display: flex;
  align-items: center;
  justify-content: space-between;
  border-bottom: 2px solid #fbdcab;
  background: rgba(252, 241, 226, 0.94);
  font-size: 24px;
  font-weight: 600;
  color: #b8520b;
  white-space: nowrap;

  a {
    font-weight: 700;
    text-decoration: underline;
    text-underline-offset: 3px;
  }
`;

const Messages = styled.div`
  flex: 1;
  min-height: 0;
  padding: 0 32px 25px;
  display: flex;
  flex-direction: column;
  justify-content: flex-end;
  overflow: hidden;
  background: rgba(252, 250, 248, 0.75);
`;

const Bubble = styled.div`
  flex: none;
  width: 542px;
  margin-top: 56px;
  padding: 16px 0 24px 24px;
  border: 2px solid #e8e8ec;
  border-radius: 30px 30px 30px 10px;
  background: linear-gradient(#fff, #fafafc);
  box-shadow: 0 10px 26px rgba(17, 24, 39, 0.07);
  font-size: 27px;
  line-height: 37px;
  color: #111827;
  white-space: pre-line;

  ${(p) =>
    p.$out &&
    css`
      align-self: flex-end;
      margin-top: ${p.$labelled ? 7 : 56}px;
      border-color: #8ad9a9;
      border-radius: 30px 30px 10px 30px;
      background: linear-gradient(#c9f7db, #a3edc1);
      box-shadow: 0 10px 26px rgba(37, 211, 102, 0.13);
      color: #14432a;
    `}
`;

const Meta = styled.div`
  height: 32px;
  margin: ${(p) => (p.$out ? "17px 26px 0 0" : "14px 24px 0 0")};
  display: flex;
  align-items: center;
  justify-content: flex-end;
  gap: 10px;
  font-size: 23px;
  color: ${(p) => (p.$out ? "#4f8c68" : "#6b7280")};

  svg:first-child {
    color: #25d366;
    opacity: 0.6;
  }
`;

const ByAi = styled.div`
  flex: none;
  align-self: flex-end;
  height: 32px;
  margin-top: 56px;
  padding-right: 4px;
  display: flex;
  align-items: center;
  gap: 8px;
  font-size: 22px;
  font-weight: 700;
  color: #25d366;
`;

const DayChip = styled.time`
  flex: none;
  align-self: center;
  height: 51px;
  margin-top: 25px;
  padding: 0 24px 2px;
  display: flex;
  align-items: center;
  border: 2px solid #e6e7ea;
  border-radius: 26px;
  background: linear-gradient(#fdfdfd, #f8f8f9);
  box-shadow: 0 6px 16px rgba(17, 24, 39, 0.05);
  font-size: 21px;
  font-weight: 600;
  letter-spacing: 1px;
  color: #4b5563;
`;

const StatusBar = styled.div`
  height: 62px;
  padding: 0 44px 0 32px;
  display: flex;
  align-items: center;
  border: solid #e8ecef;
  border-width: 2px 0;
  background: rgba(246, 250, 252, 0.92);
  font-size: 23px;
  font-weight: 600;
  color: #b8520b;

  &::before {
    content: "";
    flex: none;
    width: 16px;
    height: 16px;
    margin-right: 18px;
    border-radius: 50%;
    background: #f59e0b;
  }
  p {
    flex: 1;
    min-width: 0;
    margin: 0 16px 0 11px;
    overflow: hidden;
    white-space: nowrap;
    text-overflow: ellipsis;
  }
`;

const FollowUp = styled.button`
  display: flex;
  align-items: center;
  gap: 10px;
  font-weight: 600;
  color: #15803d;
`;

const Composer = styled.footer`
  padding: 24px 32px;
  background: #fff;
`;

const Locked = styled.div`
  height: 156px;
  padding: 0 24px 2px 26px;
  display: flex;
  align-items: center;
  border: 2px solid #fbdba6;
  border-radius: 28px;
  background: linear-gradient(#fef1de, #fff8ee);
  color: #b8520b;

  p {
    flex: 1;
    margin: 0 16px 0 18px;
    font-size: 25px;
    line-height: 37px;
  }
`;

const SendButton = styled.button`
  flex: none;
  width: 212px;
  height: 60px;
  border-radius: 16px;
  background: linear-gradient(#2fe27a, #1cb453);
  box-shadow: 0 8px 20px rgba(37, 211, 102, 0.25), inset 0 2px 0 rgba(255, 255, 255, 0.25), inset 0 -2px 0 rgba(0, 80, 30, 0.15);
  font-size: 24px;
  font-weight: 600;
  color: #fff;
`;

const MessageMeta = ({ time, out }) => (
  <Meta $out={out}>
    <BsWhatsapp size={22} />
    {time}
    {out && <Icon name="check" size={20} color="#8fa8b0" weight={2.5} />}
  </Meta>
);

const messages = {
  shop: "Anouk's shop was a fun one to build.\nWe can definitely help. Quick question\nso I point you in the right direction:\nare you mainly after online ordering,\nor a fresh look overall?",
  both: "Both honestly. Online ordering is the\nbig one, people keep calling to\nreserve bread 🙈",
  proposal:
    "That's exactly what we do best. I'll\nhave Alex put together a short\nproposal with examples from two\nbakeries we've built ordering flows\nfor. Could you share roughly how\nmany products you'd want orderable\nat launch?",
  loyalty: "Around 30 I think? Also — do you\nbuild loyalty cards into the site?",
};

const Conversation = () => (
  <Thread>
    <ThreadHead>
      <Avatar initials="SM" color="#6366f1" channel="whatsapp" />
      <AgentToggle>
        <input type="checkbox" role="switch" />
        <span>No agent</span>
      </AgentToggle>
      <Tools>
        <Tool aria-label="Star"><Icon name="star" size={30} /></Tool>
        <Tool aria-label="Pin"><Icon name="pin" size={30} /></Tool>
        <Tool aria-label="Close chat"><Icon name="checkFill" size={27} /></Tool>
        <Tool aria-label="Search"><Icon name="search" size={28} /></Tool>
        <Tool aria-label="Details" $on><Icon name="infoFill" size={27} /></Tool>
        <Tool aria-label="More"><Icon name="dots" size={28} /></Tool>
      </Tools>
    </ThreadHead>
    <Banner>
      AI is paused on this chat — you'll need to reply manually.
      <a href="#resume">Resume AI</a>
    </Banner>
    <Messages>
      <Bubble $out>
        {messages.shop}
        <MessageMeta time="10:15 AM" out />
      </Bubble>
      <Bubble>
        {messages.both}
        <MessageMeta time="10:22 AM" />
      </Bubble>
      <ByAi>
        <Icon name="sparkle" size={26} solid weight={1} />
        AI
      </ByAi>
      <Bubble $out $labelled>
        {messages.proposal}
        <MessageMeta time="10:23 AM" out />
      </Bubble>
      <DayChip>JUL 21, 2026</DayChip>
      <Bubble>
        {messages.loyalty}
        <MessageMeta time="9:47 AM" />
      </Bubble>
    </Messages>
    <StatusBar>
      <Icon name="pauseFill" size={24} />
      <p>AI can’t reply — no AI agent handles ...</p>
      <FollowUp>
        <Icon name="clockFill" size={24} />
        Schedule follow-up
      </FollowUp>
    </StatusBar>
    <Composer>
      <Locked>
        <Icon name="lock" size={28} />
        <p>WhatsApp's 24-hour customer-service window has closed. Send an approved template to reopen it.</p>
        <SendButton>Send template</SendButton>
      </Locked>
    </Composer>
  </Thread>
);

/* ---------- contact details ---------- */

const Details = styled.aside`
  min-height: 0;
  display: flex;
  flex-direction: column;
  border-left: 2px solid #e6e8ec;
  background: #fff;
  overflow: hidden;
`;

const Profile = styled.div`
  flex: none;
  padding: 32px 30px 32px 32px;
  display: flex;
  flex-direction: column;
  align-items: center;
  border-bottom: 4px solid #ececee;

  h2 {
    margin-top: 22px;
    font-size: 30px;
    line-height: 40px;
    font-weight: 700;
  }
`;

const Country = styled.p`
  margin-top: 6px;
  display: flex;
  align-items: center;
  gap: 21px;
  font-size: 23px;
  line-height: 36px;
  font-weight: 500;
  color: #6b7280;
`;

const Score = styled.div`
  margin-top: 24px;
  display: flex;
  align-items: center;
  gap: 16px;

  span {
    width: 72px;
    height: 48px;
    display: grid;
    place-items: center;
    border-radius: 12px;
    background: #fde2e3;
    font-weight: 700;
    color: #b91c1c;
  }
  div {
    width: 88px;
    height: 8px;
    border-radius: 4px;
    background: #efeff0;
  }
`;

const Actions = styled.div`
  width: 100%;
  margin-top: 52px;
  display: grid;
  grid-template-columns: 1fr 1fr;
  gap: 16px;
`;

const Action = styled.button`
  height: 120px;
  padding-bottom: 6px;
  display: flex;
  flex-direction: column;
  align-items: center;
  justify-content: center;
  gap: 12px;
  border: 2px solid #e4e6ea;
  border-top-color: #fff;
  border-radius: 26px;
  background: linear-gradient(#fff, #fafbfd);
  box-shadow: 0 14px 30px rgba(17, 24, 39, 0.1), 0 4px 6px rgba(17, 24, 39, 0.05);
  font-size: 22px;
  font-weight: 600;
  color: #374151;
`;

const Block = styled.section`
  flex: none;
  padding: 26px 30px ${(p) => p.$pb || 24}px 32px;
  border-bottom: 2px solid #eeeff1;
`;

const BlockHead = styled.div`
  height: 28px;
  display: flex;
  align-items: center;
  font-size: 22px;
  font-weight: 600;
  color: #25d366;

  h3 {
    margin: 0 auto 0 12px;
    display: flex;
    align-items: center;
    gap: 14px;
    font-size: 22px;
    font-weight: 600;
    letter-spacing: 1px;
    color: #6b7280;
  }
`;

const Fields = styled.dl`
  margin-top: 18px;
`;

const Field = styled.div`
  height: ${(p) => (p.$tall ? 60 : 54)}px;
  display: flex;
  align-items: center;
  justify-content: space-between;

  dt {
    font-size: 23px;
    color: #6b7280;
  }
  dd {
    font-family: ${(p) => (p.$mono ? '"DejaVu Sans Mono", monospace' : "inherit")};
    font-size: 25px;
    font-weight: ${(p) => (p.$mono ? 400 : 500)};
  }
`;

const Stats = styled.div`
  margin-top: 20px;
  display: grid;
  grid-template-columns: repeat(3, 1fr);
  gap: 12px;
`;

const Stat = styled.div`
  height: 91px;
  padding-top: 13px;
  border-radius: 14px;
  background: #f7f7f8;
  text-align: center;

  strong {
    display: block;
    font-size: 30px;
    line-height: 36px;
    font-weight: 700;
  }
  span {
    display: block;
    font-size: 20px;
    line-height: 28px;
    font-weight: 500;
    color: #6b7280;
  }
`;

const Counter = styled.div`
  height: 110px;
  margin-top: 20px;
  padding: 0 20px 2px;
  display: flex;
  align-items: center;
  justify-content: space-between;
  border-radius: 14px;
  background: #f7f7f8;

  p {
    font-size: 23px;
    line-height: 36px;
    color: #6b7280;
  }
  strong {
    display: block;
    font-size: 30px;
    line-height: 42px;
    font-weight: 700;
  }
`;

const ResetButton = styled.button`
  height: 54px;
  padding: 0 16px 0 18px;
  display: flex;
  align-items: center;
  gap: 10px;
  border: 2px solid #b5efcb;
  border-radius: 12px;
  font-size: 22px;
  font-weight: 600;
  color: #25d366;
`;

const Empty = styled.p`
  margin-top: 28px;
  font-size: 24px;
  line-height: 40px;
  font-style: italic;
  color: #9ca3af;
`;

const Labels = styled.div`
  margin-top: 18px;
  display: flex;
  gap: 12px;
`;

const Label = styled.button`
  height: 38px;
  padding: 0 10px 0 12px;
  display: flex;
  align-items: center;
  gap: 8px;
  border-radius: 8px;
  font-size: 20px;
  font-weight: 600;
  ${(p) =>
    p.$add
      ? css`
          border: 2px dashed #cdd0d6;
          font-size: 21px;
          font-weight: 500;
          color: #6b7280;
        `
      : css`
          border: 2px solid #f9b9bb;
          background: #fde4e4;
          color: #dc2626;
        `}
`;

const Deal = styled.div`
  margin-top: 32px;
  padding: 0 14px 0 16px;
  display: flex;
  align-items: center;
  gap: 16px;

  &::before {
    content: "";
    flex: none;
    width: 16px;
    height: 16px;
    border-radius: 50%;
    background: #94a3b8;
  }
  div {
    flex: 1;
    min-width: 0;
  }
  h4 {
    margin: 0;
    font-size: 25px;
    line-height: 36px;
    font-weight: 600;
    overflow: hidden;
    white-space: nowrap;
  }
  p {
    font-size: 22px;
    line-height: 36px;
    color: #6b7280;
  }
  strong {
    font-size: 25px;
    font-weight: 700;
  }
`;

const Floating = styled.button`
  position: fixed;
  right: 37px;
  bottom: 37px;
  width: 66px;
  height: 66px;
  display: grid;
  place-items: center;
  border: 2px solid #ecedf0;
  border-radius: 50%;
  background: rgba(249, 250, 251, 0.65);
  box-shadow: 0 4px 16px rgba(17, 24, 39, 0.05);
  color: #bcc1cc;
`;

const Flag = () => (
  <svg width="26" height="20" viewBox="0 0 26 20" aria-hidden="true">
    <path d="M1 2c4-1.5 8 .8 12 0s8-2 12-.8v17c-4-1.2-8 .6-12 .6S5 18 1 19.3z" fill="#f1f3f5" />
    <path d="M1 2c4-1.5 8 .8 12 0s8-2 12-.8V7c-4-1.2-8 .3-12 .8S5 7 1 8z" fill="#b22234" />
    <path d="M1 13.5c4-1.2 8 .5 12 0s8-1.8 12-.8v5.5c-4-1.2-8 .6-12 .6S5 18 1 19.3z" fill="#1f4795" />
  </svg>
);

const SectionHead = ({ icon, title, action, solid }) => (
  <BlockHead>
    <Icon name={icon} size={28} solid={solid} weight={solid ? 1 : 1.5} />
    <h3>
      {title}
      <Icon name="down" size={21} />
    </h3>
    {action && <a href={`#${title.toLowerCase()}`}>{action}</a>}
  </BlockHead>
);

const stats = [
  ["5", "Total"],
  ["3", "Received"],
  ["2", "Sent"],
  ["2", "AI replies"],
  ["0", "Human"],
  ["0", "Credits"],
];

const ContactDetails = () => (
  <Details>
    <Profile>
      <Avatar initials="SM" color="#6366f1" channel="whatsapp" size={136} />
      <h2>Sofia Martinez</h2>
      <Country><Flag />Netherlands</Country>
      <Score>
        <span>0</span>
        <div />
      </Score>
      <Actions>
        <Action><Icon name="mailFill" size={28} color="#25d366" />Email</Action>
        <Action><Icon name="calendarFill" size={28} color="#25d366" weight={1.6} />Book</Action>
      </Actions>
    </Profile>
    <Block $pb={26}>
      <SectionHead icon="pencil" title="CONTACT" action="Edit" />
      <Fields>
        <Field $tall $mono><dt>Phone</dt><dd>+31612345021</dd></Field>
        <Field $tall><dt>Email</dt><dd>sofia.martinez@bakkerijdemolen.nl</dd></Field>
        <Field><dt>Country</dt><dd>NL</dd></Field>
        <Field><dt>Created</dt><dd>7/21/2026</dd></Field>
      </Fields>
    </Block>
    <Block>
      <SectionHead icon="barsFill" title="ACTIVITY STATS" />
      <Stats>
        {stats.map(([value, label]) => (
          <Stat key={label}>
            <strong>{value}</strong>
            <span>{label}</span>
          </Stat>
        ))}
      </Stats>
      <Counter>
        <div>
          <p>AI message counter</p>
          <strong>0</strong>
        </div>
        <ResetButton><Icon name="refresh" size={26} weight={1.4} />Reset</ResetButton>
      </Counter>
    </Block>
    <Block>
      <SectionHead icon="sparkle" title="AGENT" action="Assign" solid />
      <Empty>No agent assigned</Empty>
    </Block>
    <Block>
      <SectionHead icon="tag" title="TAGS" action="Manage" />
      <Labels>
        <Label>hot-lead<Icon name="cross" size={15} color="#f08a8a" weight={2} /></Label>
        <Label $add><Icon name="plus" size={16} weight={2} />Add</Label>
      </Labels>
    </Block>
    <Block>
      <SectionHead icon="dollar" title="DEAL" action="Add deal" />
      <Deal>
        <div>
          <h4>Website redesign — Bakkerij D...</h4>
          <p>Inbound</p>
        </div>
        <strong>€4,500</strong>
      </Deal>
    </Block>
  </Details>
);

const App = () => (
  <>
    <GlobalStyle />
    <Page>
      <Sidebar />
      <ChatList />
      <MainPanel as="main">
        <Conversation />
        <ContactDetails />
      </MainPanel>
    </Page>
    <Floating aria-label="Assistant">
      <Icon name="target" size={27} />
    </Floating>
  </>
);

export default App;
